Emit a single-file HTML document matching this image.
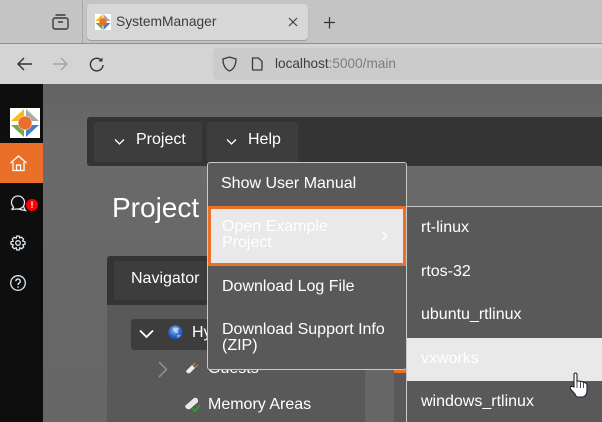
<!DOCTYPE html>
<html><head><meta charset="utf-8"><style>
html,body{margin:0;padding:0;width:602px;height:422px;overflow:hidden;background:#666;font-family:"Liberation Sans",sans-serif}
.a{position:absolute}
.t{position:absolute;white-space:nowrap;line-height:1}
svg{position:absolute;overflow:visible}
</style></head><body>
<div class="a" style="left:0;top:0;width:602px;height:43px;background:#c4c4c4"></div>
<div class="a" style="left:0;top:43px;width:602px;height:1px;background:#8e8e8e"></div>
<div class="a" style="left:82px;top:0;width:1px;height:43px;background:#a8a8a8"></div>
<div class="a" style="left:0;top:44px;width:602px;height:40px;background:#d4d4d4"></div>
<div class="a" style="left:87px;top:4px;width:221px;height:36px;background:#d7d7d7;border-radius:4px;box-shadow:0 1px 1px #999"></div>
<svg style="left:52px;top:13px" width="17" height="17" fill="none" stroke="#3a3a3a" stroke-width="1.4"><rect x="1" y="5" width="15" height="11" rx="2"/><path d="M3.5 2h10M6 9h5"/></svg>
<svg style="left:95px;top:14px" width="16" height="16" viewBox="0 0 16 16"><rect width="16" height="16" fill="#fff"/><path d="M.5 7L7.500 0V7Z" fill="#f8b912"/><path d="M8.500 0L15.500 7H8.500Z" fill="#a9a9a9"/><path d="M.5 9H7.500V16Z" fill="#76a94b"/><path d="M15.500 9H8.500V16Z" fill="#4a7cc6"/><circle cx="8" cy="8" r="3.700" fill="#ea6f2a"/></svg>
<div class="t" style="left:116px;top:15px;font-size:13.8px;color:#3c3c3c">SystemManager</div>
<svg style="left:288px;top:17px" width="10" height="10" stroke="#3a3a3a" stroke-width="1.1"><path d="M1 1L9 9M9 1L1 9"/></svg>
<svg style="left:323px;top:16px" width="13" height="13" stroke="#333" stroke-width="1.2"><path d="M6.5 1V12.500M1 6.500H12"/></svg>
<svg style="left:16px;top:56px" width="17" height="16" fill="none" stroke="#333" stroke-width="1.4"><path d="M16 8H2M8 2L2 8L8 14"/></svg>
<svg style="left:52px;top:56px" width="17" height="16" fill="none" stroke="#a5a5a5" stroke-width="1.4"><path d="M1 8H15M9 2L15 8L9 14"/></svg>
<svg style="left:89px;top:57px" width="15" height="15" fill="none" stroke="#333" stroke-width="1.4"><path d="M12.500 3.500A6.300 6.300 0 1 0 14 8"/><path d="M13.500 .5V4.500H9.500" fill="#333" stroke="none"/></svg>
<div class="a" style="left:213px;top:48px;width:389px;height:32px;background:#cbcbcb;border-radius:4px 0 0 4px"></div>
<svg style="left:222px;top:56px" width="15" height="16" fill="none" stroke="#3a3a3a" stroke-width="1.3"><path d="M7.500 1L14 3C14 9 12 13 7.500 15C3 13 1 9 1 3Z"/></svg>
<svg style="left:251px;top:57px" width="12" height="14" fill="none" stroke="#3a3a3a" stroke-width="1.3"><path d="M1.500 1H7.500L11 4.500V12.500Q11 13 10.500 13H2Q1.500 13 1.500 12.500Z"/></svg>
<div class="t" style="left:275px;top:57px;font-size:13.6px;color:#3c3c3c">localhost<span style="color:#7d7d7d">:5000/main</span></div>

<div class="a" style="left:0;top:84px;width:602px;height:338px;background:linear-gradient(#636363,#6a6a6a 60px,#666)"></div>
<div class="a" style="left:0;top:84px;width:43px;height:338px;background:#0e0e0e"></div>
<svg style="left:10px;top:108px" width="30" height="30" viewBox="0 0 30 30"><rect width="30" height="30" fill="#fff"/><path d="M1 13L14 1V13Z" fill="#f8b912"/><path d="M16 1L29 13H16Z" fill="#a9a9a9"/><path d="M1 17H14V29Z" fill="#76a94b"/><path d="M29 17H16V29Z" fill="#4a7cc6"/><circle cx="15" cy="15" r="7" fill="#ea6f2a" stroke="#fff" stroke-width=".5"/></svg>
<div class="a" style="left:0;top:143px;width:43px;height:40px;background:#ea7029"></div>
<svg style="left:10px;top:155px" width="17" height="17" fill="none" stroke="#fff" stroke-width="1.3"><path d="M.5 8L8.500 1L16.500 8M3 7V15.500H14V7M6.500 15.500V10H10.500V15.500"/></svg>
<svg style="left:9px;top:194px" width="18" height="18" fill="none" stroke="#dfe9f2" stroke-width="1.3"><path d="M4.500 13Q2.500 11 2.500 8.500A6.500 6.500 0 1 1 9 15H8.500Q6 15 2.500 15.500Q4 14.500 4.500 13Z"/><path d="M14.500 12Q15 14.500 16.500 16.500L9 15"/></svg>
<div class="a" style="left:26px;top:199px;width:12px;height:12px;background:#f00;border-radius:50%;color:#fff;font:bold 9px/12px 'Liberation Sans',sans-serif;text-align:center">!</div>
<svg style="left:10px;top:235px" width="16" height="16" viewBox="0 0 16 16" fill="none" stroke="#dfe9f2" stroke-width="1.3"><circle cx="8" cy="8" r="2.300"/><path d="M6.800 1H9.200L9.700 3L11.500 2.200L13.500 4L12.600 6L15 6.800V9.200L12.800 9.800L13.700 11.800L11.800 13.700L9.800 12.800L9.200 15H6.800L6.200 12.800L4.200 13.700L2.300 11.800L3.200 9.800L1 9.200V6.800L3.200 6.200L2.300 4.200L4.200 2.300L6.200 3.200Z"/></svg>
<svg style="left:10px;top:275px" width="16" height="16" fill="none" stroke="#dfe9f2" stroke-width="1.300"><circle cx="8" cy="8" r="7.300"/><path d="M5.800 6.200A2.200 2.200 0 1 1 9 8.200Q8 8.700 8 10"/><path d="M8 11.300V12.800"/></svg>

<div class="a" style="left:87px;top:117px;width:515px;height:49px;background:#343434;border-radius:3px 0 0 3px"></div>
<div class="a" style="left:94px;top:122px;width:108px;height:40px;background:#3d3d3d;border-radius:2px"></div>
<div class="a" style="left:207px;top:122px;width:91px;height:40px;background:#3d3d3d;border-radius:2px"></div>
<svg style="left:114px;top:138px" width="11" height="8" fill="none" stroke="#fff" stroke-width="1.300"><path d="M1 1.500L5.500 6L10 1.500"/></svg>
<div class="t" style="left:136px;top:132px;font-size:16px;color:#fff">Project</div>
<svg style="left:226px;top:138px" width="11" height="8" fill="none" stroke="#fff" stroke-width="1.300"><path d="M1 1.500L5.500 6L10 1.500"/></svg>
<div class="t" style="left:248px;top:132px;font-size:16px;color:#fff">Help</div>
<div class="t" style="left:112px;top:194px;font-size:28px;color:#fff">Project</div>

<div class="a" style="left:107px;top:256px;width:300px;height:166px;background:#595959;border-radius:3px 3px 0 0"></div>
<div class="a" style="left:107px;top:256px;width:300px;height:49px;background:#343434;border-radius:3px 3px 0 0"></div>
<div class="a" style="left:114px;top:261px;width:293px;height:39px;background:#3d3d3d;border-radius:2px"></div>
<div class="t" style="left:131px;top:271px;font-size:16px;color:#fff">Navigator</div>
<div class="a" style="left:131px;top:319px;width:120px;height:31px;background:#3d3d3d;border-radius:3px"></div>
<svg style="left:139px;top:329px" width="15" height="10" fill="none" stroke="#fff" stroke-width="1.800"><path d="M1 1.500L7.500 8L14 1.500"/></svg>
<svg style="left:168px;top:325px" width="15" height="15"><defs><radialGradient id="g" cx=".45" cy=".35" r=".75"><stop offset="0" stop-color="#8fb8ee"/><stop offset=".55" stop-color="#2f62c0"/><stop offset="1" stop-color="#123a80"/></radialGradient></defs><circle cx="7.500" cy="7.500" r="7.300" fill="url(#g)"/><path d="M5 3Q9 1.500 11 3.500Q9 6 10 8Q7 8.500 6 6Q4.500 5 5 3Z" fill="#cfe0f6" opacity=".75"/><path d="M9 10Q12 9 13 10.500Q11 13 9 12.500Z" fill="#cfe0f6" opacity=".55"/></svg>
<div class="t" style="left:192px;top:325px;font-size:16px;color:#fff">Hypervisor</div>
<svg style="left:158px;top:361px" width="10" height="17" fill="none" stroke="#8d8d8d" stroke-width="1.600"><path d="M1 1L8.500 8.500L1 16"/></svg>
<svg style="left:185px;top:362px" width="14" height="14"><path d="M1 9L7 3L10 6L5 11Q2 12 1 9Z" fill="#eee"/><path d="M8 3.500L10 1M10 5.500L12.500 3" stroke="#c9913a" stroke-width="1.200"/></svg>
<div class="t" style="left:208px;top:361px;font-size:16px;color:#fff">Guests</div>
<svg style="left:184px;top:396px" width="18" height="16"><path d="M1 10L10 2Q13 1 14 4L14 6L6 13Q2 14 1 10Z" fill="#e8e8e8"/><path d="M8 12L11 15L16 9" fill="none" stroke="#22a322" stroke-width="1.800"/></svg>
<div class="t" style="left:208px;top:397px;font-size:16px;color:#fff">Memory Areas</div>
<div class="a" style="left:365px;top:370px;width:29px;height:52px;background:#666"></div>
<div class="a" style="left:394px;top:370px;width:13px;height:3px;background:#ea7029"></div>

<div class="a" style="left:207px;top:162px;width:198px;height:206px;background:#595959;border:1px solid #c8c8c8;border-radius:3px"></div>
<div class="a" style="left:208px;top:206px;width:192px;height:54px;background:#e9e9e9;border:3px solid #ea7029"></div>
<div class="t" style="left:221px;top:176px;font-size:16px;color:#fff">Show User Manual</div>
<div class="t" style="left:222px;top:219px;font-size:16px;color:#fff">Open Example</div>
<div class="t" style="left:222px;top:235px;font-size:16px;color:#fff">Project</div>
<svg style="left:381px;top:231px" width="7" height="10" fill="none" stroke="#fff" stroke-width="1.500"><path d="M1.500 1L5.500 5L1.500 9"/></svg>
<div class="t" style="left:222px;top:279px;font-size:16px;color:#fff">Download Log File</div>
<div class="t" style="left:222px;top:322px;font-size:16px;color:#fff">Download Support Info</div>
<div class="t" style="left:222px;top:338px;font-size:16px;color:#fff">(ZIP)</div>

<div class="a" style="left:406px;top:206px;width:196px;height:216px;background:#595959;border-left:1px solid #c8c8c8;border-top:1px solid #c8c8c8;box-sizing:border-box"></div>
<div class="a" style="left:407px;top:338px;width:195px;height:43px;background:#e9e9e9"></div>
<div class="t" style="left:421px;top:220px;font-size:16px;color:#fff">rt-linux</div>
<div class="t" style="left:421px;top:264px;font-size:16px;color:#fff">rtos-32</div>
<div class="t" style="left:421px;top:307px;font-size:16px;color:#fff">ubuntu_rtlinux</div>
<div class="t" style="left:421px;top:351px;font-size:16px;color:#fff">vxworks</div>
<div class="t" style="left:421px;top:394px;font-size:16px;color:#fff">windows_rtlinux</div>
<svg style="left:569px;top:372px" width="20" height="26"><path d="M5 15V3Q5 1 6.500 1Q8 1 8 3V9.500Q10 8.500 11.500 9.500Q13.500 9 14.500 10.500Q17.500 10.500 18 13V19Q18 24 13.500 25H9Q7 25 6 22L1.500 17Q.5 14.500 2.500 14.300Q4 14.300 5 15Z" fill="#fff" stroke="#1c2233" stroke-width="1.100"/><path d="M8 10V16M11.500 10V16M14.500 11V16" stroke="#1c2233" stroke-width=".8"/></svg>
</body></html>
